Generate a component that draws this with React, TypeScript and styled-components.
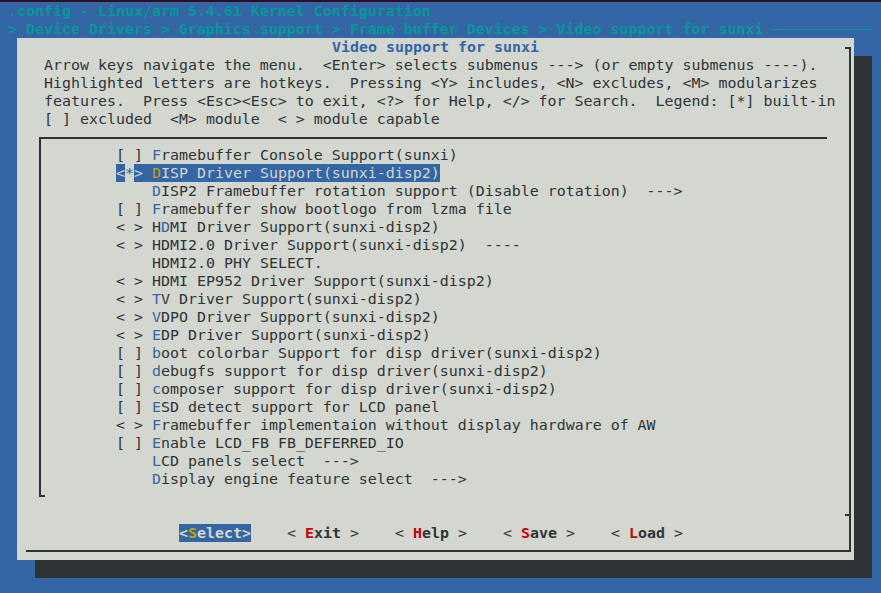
import styled, { createGlobalStyle } from 'styled-components'

const BLUE = '#3465a4'
const CYAN = '#06989a'
const GREY = '#d3d7cf'
const DARK = '#2e3436'
const YELLOW = '#c4a000'
const RED = '#cc0000'

const GlobalStyle = createGlobalStyle`
  html, body {
    margin: 0;
    padding: 0;
    background: ${BLUE};
  }
  * {
    box-sizing: border-box;
  }
`

interface MenuItem {
  mark: string
  label: string
  hot: number
  plain?: boolean
  selected?: boolean
}

const items: MenuItem[] = [
  { mark: '[ ]', label: 'Framebuffer Console Support(sunxi)', hot: 0 },
  { mark: '<*>', label: 'DISP Driver Support(sunxi-disp2)', hot: 0, selected: true },
  { mark: '   ', label: 'DISP2 Framebuffer rotation support (Disable rotation)  --->', hot: 0 },
  { mark: '[ ]', label: 'Framebuffer show bootlogo from lzma file', hot: 0 },
  { mark: '< >', label: 'HDMI Driver Support(sunxi-disp2)', hot: 1 },
  { mark: '< >', label: 'HDMI2.0 Driver Support(sunxi-disp2)  ----', hot: 1, plain: true },
  { mark: '   ', label: 'HDMI2.0 PHY SELECT.', hot: 1, plain: true },
  { mark: '< >', label: 'HDMI EP952 Driver Support(sunxi-disp2)', hot: 1, plain: true },
  { mark: '< >', label: 'TV Driver Support(sunxi-disp2)', hot: 0 },
  { mark: '< >', label: 'VDPO Driver Support(sunxi-disp2)', hot: 0 },
  { mark: '< >', label: 'EDP Driver Support(sunxi-disp2)', hot: 0 },
  { mark: '[ ]', label: 'boot colorbar Support for disp driver(sunxi-disp2)', hot: 0 },
  { mark: '[ ]', label: 'debugfs support for disp driver(sunxi-disp2)', hot: 0 },
  { mark: '[ ]', label: 'composer support for disp driver(sunxi-disp2)', hot: 0 },
  { mark: '[ ]', label: 'ESD detect support for LCD panel', hot: 0 },
  { mark: '< >', label: 'Framebuffer implementaion without display hardware of AW', hot: 0 },
  { mark: '[ ]', label: 'Enable LCD_FB FB_DEFERRED_IO', hot: 0 },
  { mark: '   ', label: 'LCD panels select  --->', hot: 0 },
  { mark: '   ', label: 'Display engine feature select  --->', hot: 0 },
]

const helpLines = [
  'Arrow keys navigate the menu.  <Enter> selects submenus ---> (or empty submenus ----).',
  'Highlighted letters are hotkeys.  Pressing <Y> includes, <N> excludes, <M> modularizes',
  'features.  Press <Esc><Esc> to exit, <?> for Help, </> for Search.  Legend: [*] built-in',
  '[ ] excluded  <M> module  < > module capable',
]

const buttons = [
  { label: 'Select', active: true },
  { label: 'Exit' },
  { label: 'Help' },
  { label: 'Save' },
  { label: 'Load' },
]

export default function App() {
  return (
    <>
      <GlobalStyle />
      <Screen>
        <BackTitle>.config - Linux/arm 5.4.61 Kernel Configuration</BackTitle>
        <Breadcrumb>
          <span>&gt; Device Drivers &gt; Graphics support &gt; Frame buffer Devices &gt; Video support for sunxi</span>
          <BreadcrumbRule />
        </Breadcrumb>
        <Dialog>
          <DialogTitle>Video support for sunxi</DialogTitle>
          <HelpText>
            {helpLines.map((line) => (
              <div key={line}>{line}</div>
            ))}
          </HelpText>
          <MenuBox>
            {items.map((item) => (
              <MenuRow key={item.label} item={item} />
            ))}
          </MenuBox>
          <Separator />
          <ButtonRow>
            {buttons.map((b) => (
              <Button key={b.label} $active={!!b.active}>
                {b.active ? '<' : '< '}
                <ButtonHot $active={!!b.active}>{b.label[0]}</ButtonHot>
                <ButtonLabel $active={!!b.active}>{b.label.slice(1)}</ButtonLabel>
                {b.active ? '>' : ' >'}
              </Button>
            ))}
          </ButtonRow>
        </Dialog>
      </Screen>
    </>
  )
}

function MenuRow({ item }: { item: MenuItem }) {
  const before = item.label.slice(0, item.hot)
  const key = item.label[item.hot]
  const after = item.label.slice(item.hot + 1)

  if (item.selected) {
    return (
      <Row>
        <Selected>{item.mark[0]}</Selected>
        <Cursor>{item.mark[1]}</Cursor>
        <Selected>
          {item.mark[2] + ' ' + before}
          <SelectedKey>{key}</SelectedKey>
          {after}
        </Selected>
      </Row>
    )
  }

  return (
    <Row>
      {item.mark + ' ' + before}
      {item.plain ? key : <HotKey>{key}</HotKey>}
      {after}
    </Row>
  )
}

const Screen = styled.div`
  width: 881px;
  height: 593px;
  overflow: hidden;
  background: ${BLUE};
  border-top: 2px solid #2c0f25;
  font-family: 'DejaVu Sans Mono', 'Liberation Mono', monospace;
  font-size: 14.95px;
  line-height: 18px;
  color: ${DARK};
  white-space: pre;
`

const BackTitle = styled.div`
  height: 18px;
  padding-left: 8px;
  color: ${CYAN};
  font-weight: bold;
`

const Breadcrumb = styled.div`
  height: 18px;
  display: flex;
  align-items: center;
  padding: 0 9px 0 8px;
  color: ${CYAN};
  font-weight: bold;
`

const BreadcrumbRule = styled.div`
  flex: 1;
  height: 1px;
  margin-left: 9px;
  background: ${CYAN};
`

const Dialog = styled.div`
  position: relative;
  width: 837px;
  height: 522px;
  margin-left: 17px;
  background: ${GREY};
  box-shadow: 18px 18px 0 ${DARK};
  display: flex;
  flex-direction: column;

  &::after {
    content: '';
    position: absolute;
    left: 9px;
    top: 9px;
    right: 3px;
    bottom: 8px;
    border-right: 2px solid ${DARK};
    border-bottom: 2px solid ${DARK};
    pointer-events: none;
  }

  &::before {
    content: '';
    position: absolute;
    top: 9px;
    right: 3px;
    width: 6px;
    height: 2px;
    background: ${DARK};
  }
`

const DialogTitle = styled.div`
  height: 18px;
  text-align: center;
  color: ${BLUE};
  font-weight: bold;
`

const HelpText = styled.div`
  padding-left: 27px;
  height: 72px;
`

const MenuBox = styled.div`
  position: relative;
  width: 788px;
  height: 360px;
  margin: 9px 0 0 22px;
  padding: 7px 0 0 75px;
  border-top: 2px solid ${DARK};
  border-left: 2px solid ${DARK};

  &::after {
    content: '';
    position: absolute;
    left: -2px;
    bottom: 0;
    width: 6px;
    height: 2px;
    background: ${DARK};
  }
`

const Row = styled.div`
  height: 18px;
`

const HotKey = styled.span`
  color: ${BLUE};
`

const Selected = styled.span`
  background: ${BLUE};
  color: ${GREY};
`

const Cursor = styled.span`
  color: ${BLUE};
`

const SelectedKey = styled.span`
  color: ${YELLOW};
`

const Separator = styled.div`
  position: relative;
  height: 18px;
  margin-top: 9px;

  &::after {
    content: '';
    position: absolute;
    top: 8px;
    right: 3px;
    width: 6px;
    height: 2px;
    background: ${DARK};
  }
`

const ButtonRow = styled.div`
  height: 18px;
  display: flex;
  gap: 36px;
  padding-left: 162px;
`

const Button = styled.span<{ $active: boolean }>`
  width: 72px;
  height: 18px;
  background: ${(p) => (p.$active ? BLUE : 'transparent')};
  color: ${(p) => (p.$active ? GREY : DARK)};
  font-weight: ${(p) => (p.$active ? 'bold' : 'normal')};
`

const ButtonHot = styled.span<{ $active: boolean }>`
  color: ${(p) => (p.$active ? YELLOW : RED)};
  font-weight: bold;
`

const ButtonLabel = styled.span<{ $active: boolean }>`
  font-weight: bold;
  color: ${(p) => (p.$active ? GREY : DARK)};
`
